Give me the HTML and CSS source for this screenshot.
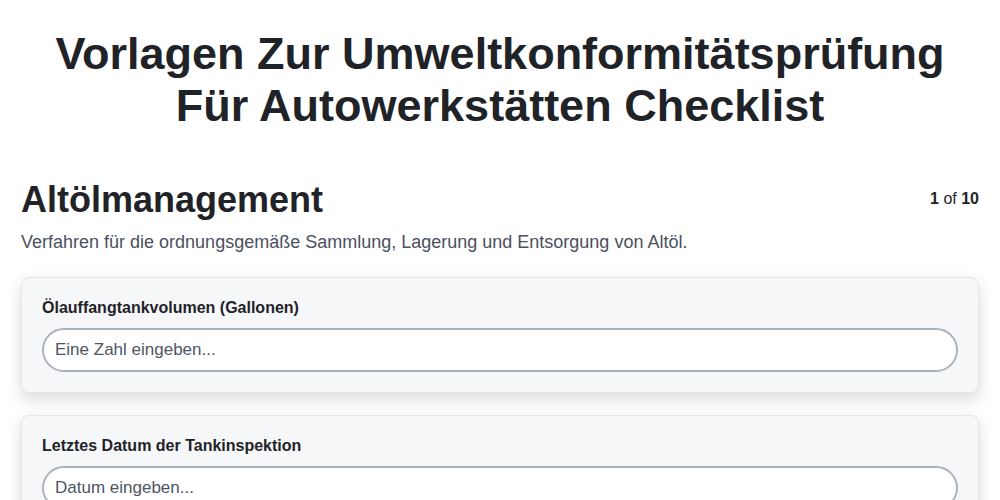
FILE: index.html
```html
<!DOCTYPE html>
<html lang="de">
<head>
<meta charset="utf-8">
<title>Checklist</title>
<link rel="stylesheet" href="styles.css">
</head>
<body>
<main class="page">
  <h1 class="title">Vorlagen Zur Umweltkonformitätsprüfung Für Autowerkstätten Checklist</h1>
  <section class="section">
    <div class="section-head">
      <h2 class="section-title">Altölmanagement</h2>
      <div class="counter"><b>1</b> of <b>10</b></div>
    </div>
    <p class="section-desc">Verfahren für die ordnungsgemäße Sammlung, Lagerung und Entsorgung von Altöl.</p>
    <div class="card">
      <label class="field-label" for="f1">Ölauffangtankvolumen (Gallonen)</label>
      <input class="field-input" id="f1" type="text" placeholder="Eine Zahl eingeben...">
    </div>
    <div class="card">
      <label class="field-label" for="f2">Letztes Datum der Tankinspektion</label>
      <input class="field-input" id="f2" type="text" placeholder="Datum eingeben...">
    </div>
  </section>
</main>
</body>
</html>
```

FILE: styles.css
```css
* { box-sizing: border-box; }
html, body { margin: 0; padding: 0; background: #ffffff; }
body {
  font-family: "Liberation Sans", Arial, sans-serif;
  color: #1f2328;
}
.page {
  max-width: 1000px;
  margin: 0 auto;
  padding: 28px 21px 40px;
}
.title {
  margin: 0 auto;
  max-width: 920px;
  text-align: center;
  font-size: 45px;
  line-height: 52px;
  font-weight: 700;
  color: #1f2328;
}
.section { margin-top: 46px; }
.section-head {
  display: flex;
  justify-content: space-between;
  align-items: center;
}
.section-title {
  margin: 0;
  font-size: 36px;
  line-height: 43px;
  font-weight: 700;
  color: #1f2328;
}
.counter {
  font-size: 16px;
  color: #1f2328;
  margin-bottom: 2px;
}
.counter b { font-weight: 700; }
.section-desc {
  margin: 8px 0 21px;
  font-size: 18px;
  line-height: 27px;
  color: #4a5060;
}
.card {
  display: flex;
  flex-direction: column;
  background: #f6f7f9;
  border: 1px solid #e4e6ea;
  border-radius: 8px;
  padding: 20px;
  margin-bottom: 22px;
  box-shadow: 0 6px 16px rgba(0, 0, 0, 0.15);
}
.field-label {
  font-size: 16px;
  line-height: 20px;
  font-weight: 700;
  color: #1f2328;
  margin-bottom: 10px;
}
.field-input {
  height: 44px;
  width: 100%;
  border: 2px solid #aab2bb;
  border-radius: 22px;
  background: #ffffff;
  padding: 0 11px;
  font-family: "Liberation Sans", Arial, sans-serif;
  font-size: 17px;
  color: #1f2328;
  outline: none;
}
.field-input::placeholder { color: #4f5663; opacity: 1; }
```
